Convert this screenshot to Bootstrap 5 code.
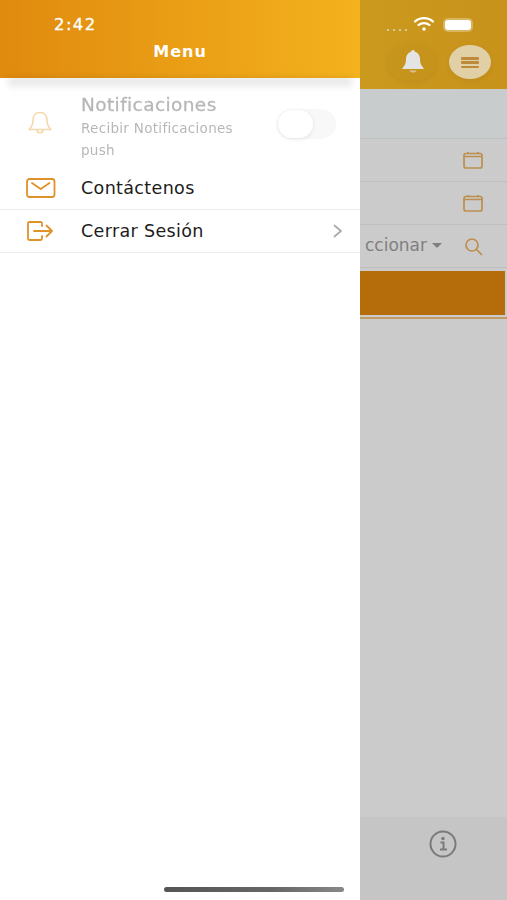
<!DOCTYPE html>
<html lang="es">
<head>
<meta charset="utf-8">
<title>Menu</title>
<link rel="stylesheet" href="https://cdn.jsdelivr.net/npm/bootstrap@5.3.0/dist/css/bootstrap.min.css">
<style>
html,body{margin:0;height:900px;overflow:hidden;background:#fff}
.shell{width:507px;height:900px;font-family:"DejaVu Sans",sans-serif;position:relative;overflow:hidden}
.drawer{width:360px;height:900px;background:#fff;flex:none}
.drawer-head{height:78px;background:linear-gradient(90deg,#e08a0e,#f4b21d);color:#fff;position:relative}
.drawer-head::after{content:"";position:absolute;left:8px;right:8px;top:100%;height:12px;background:linear-gradient(180deg,rgba(0,0,0,.14),rgba(0,0,0,0));filter:blur(3px)}
.clock{position:absolute;left:54px;top:14px;font-size:16.500px;font-weight:400;line-height:22px;letter-spacing:1.400px;-webkit-text-stroke:.3px #fff}
.menu-title{position:absolute;left:0;right:0;top:42px;text-align:center;font-size:16px;font-weight:700;line-height:20px;letter-spacing:1px}
.mi-icon{width:81px;flex:none;padding-left:26px}
.mi-notif{height:89px;background:#fff}
.mi-notif .mi-text{opacity:.33}
.notif-body{padding-top:10px}
.notif-title{font-size:18.500px;line-height:24px;color:#222;-webkit-text-stroke:.3px #222;letter-spacing:.4px;margin-top:-1px}
.notif-sub{font-size:13.500px;line-height:22px;width:180px;color:#222;letter-spacing:.3px}
.mi-row{height:43px;font-size:17.500px;color:#1c1c1c;border-bottom:1px solid #ebebeb;letter-spacing:.35px}
.toggle-off{width:59px;height:30px;border-radius:15px;background:#f8f8f8;position:absolute;left:277px;top:109px}
.toggle-off::after{content:"";position:absolute;left:1px;top:1px;width:35px;height:28px;border-radius:14px;background:#fff;box-shadow:0 1px 4px rgba(0,0,0,.09)}
.backdrop{flex:1;height:900px;background:#cbcbcb;overflow:hidden}
.bd-head{height:89px;background:linear-gradient(90deg,#cb9a1d,#c8921b);position:relative}
.bd-band{height:50px;background:#c9cccd;border-bottom:1px solid #bfbfbf}
.bd-row{height:43px;border-bottom:1px solid #bfbfbf;padding-right:24px}
.bd-sel{font-size:17px;color:#7f7f7f;white-space:nowrap;margin-right:22px}
.caret-down{display:inline-block;border:5.500px solid transparent;border-top:5.500px solid #7f7f7f;border-bottom:0;margin-left:5px;vertical-align:3px}
.bd-bar{height:44px;margin:3px 2px 0 0;background:#b56c0a}
.bd-line{height:2px;margin-top:2px;background:#c29a63}
.bd-foot{height:84px;background:#c5c5c5;margin-top:498px;padding:13px 0 0 69px}
.round-bell,.round-menu{position:absolute;border-radius:50%}
.round-bell{left:28px;top:43px;width:48px;height:38px;background:rgba(0,0,0,.015);box-shadow:0 2px 6px rgba(0,0,0,.06)}
.round-menu{left:89px;top:45px;width:42px;height:34px;background:#e1cfa6;box-shadow:0 2px 6px rgba(0,0,0,.06)}
.burger{position:absolute;left:12px;top:12px;width:18px;height:11px;display:flex;flex-direction:column;justify-content:space-between}
.burger i{display:block;height:2.500px;background:#bd8a3a;border-radius:1px}
.status{position:absolute;top:16px;left:385px;display:flex;align-items:center}
.dots{width:24px;height:2px;background-image:radial-gradient(circle,#d8c69c 1px,transparent 1.2px);background-size:6px 2px;margin-top:12px}
.batt{width:26px;height:10px;border-radius:3px;background:#fff;margin-left:10px;box-shadow:0 0 0 2px rgba(255,255,255,.3);margin-top:1px}
.homebar{position:absolute;left:164px;top:887px;width:180px;height:5px;border-radius:3px;background:linear-gradient(90deg,#555,#666 60%,#888)}
</style>
</head>
<body>
<div class="shell d-flex">
  <aside class="drawer">
    <div class="drawer-head">
      <div class="clock">2:42</div>
      <div class="menu-title">Menu</div>
    </div>
    <div class="mi-notif d-flex align-items-center">
      <div class="mi-icon mi-text">
        <svg width="28" height="28" viewBox="0 0 28 28" fill="none" stroke="#e08a0e" stroke-width="1.600" stroke-linejoin="round"><path d="M14 3.500c-4.600 0-7 3.400-7 7.500 0 4.600-1.500 7.300-4 9.500h22c-2.500-2.200-4-4.900-4-9.500 0-4.100-2.400-7.500-7-7.500z"/><path d="M11 21c0 3.600 6 3.600 6 0"/></svg>
      </div>
      <div class="mi-text notif-body">
        <div class="notif-title">Notificaciones</div>
        <div class="notif-sub">Recibir Notificaciones push</div>
      </div>
    </div>
    <div class="mi-row d-flex align-items-center">
      <div class="mi-icon">
        <svg width="30" height="20" viewBox="0 0 30 20" fill="none" stroke="#e0922a" stroke-width="1.800" stroke-linejoin="round" class="d-block"><rect x="1" y="1" width="27.500" height="18" rx="2.500"/><path d="M6 5l8.700 6L23.500 5" stroke-linecap="round"/></svg>
      </div>
      <span>Contáctenos</span>
    </div>
    <div class="mi-row d-flex align-items-center">
      <div class="mi-icon">
        <svg width="28" height="20" viewBox="0 0 28 20" fill="none" stroke="#e0922a" stroke-width="1.800" stroke-linecap="round" stroke-linejoin="round" class="d-block"><path d="M16 5V2.500C16 1.600 15.400 1 14.500 1H3.500C2.600 1 2 1.600 2 2.500v15c0 .9.600 1.500 1.500 1.500h11c.9 0 1.500-.6 1.500-1.500V15"/><path d="M8 10h18M20.500 4.500L26 10l-5.500 5.500"/></svg>
      </div>
      <span class="flex-grow-1">Cerrar Sesión</span>
      <svg width="12" height="16" viewBox="0 0 12 16" fill="none" stroke="#a9a9a9" stroke-width="1.700" stroke-linecap="round" stroke-linejoin="round" class="me-3"><path d="M2.500 2.500L9 8l-6.500 5.500"/></svg>
    </div>
  </aside>
  <div class="backdrop">
    <div class="bd-head">
      <div class="round-bell"></div>
      <div class="round-menu"><span class="burger"><i></i><i></i><i></i></span></div>
    </div>
    <div class="bd-band"></div>
    <div class="bd-row d-flex align-items-center justify-content-end">
      <svg width="20" height="18" viewBox="0 0 20 18" fill="none" stroke="#bd8f4e" stroke-width="1.700"><rect x="1" y="2.500" width="18" height="14.500" rx="2"/><path d="M1 5.500h18M5 1v1.500M15 1v1.500"/></svg>
    </div>
    <div class="bd-row d-flex align-items-center justify-content-end">
      <svg width="20" height="18" viewBox="0 0 20 18" fill="none" stroke="#bd8f4e" stroke-width="1.700"><rect x="1" y="2.500" width="18" height="14.500" rx="2"/><path d="M1 5.500h18M5 1v1.500M15 1v1.500"/></svg>
    </div>
    <div class="bd-row d-flex align-items-center justify-content-end overflow-hidden">
      <span class="bd-sel">ccionar<i class="caret-down"></i></span>
      <svg width="19" height="19" viewBox="0 0 19 19" fill="none" stroke="#bd8f4e" stroke-width="1.700" stroke-linecap="round"><circle cx="8" cy="8" r="6"/><path d="M12.500 12.500L17.500 17.500"/></svg>
    </div>
    <div class="bd-bar"></div>
    <div class="bd-line"></div>
    <div class="bd-foot">
      <svg width="28" height="28" viewBox="0 0 28 28" fill="none" stroke="#7a7a7a" stroke-width="2"><circle cx="14" cy="14" r="12.500"/><circle cx="14" cy="8.500" r="1.700" fill="#7a7a7a" stroke="none"/><path d="M11.500 12.500H14.500V19M11 19.500h7"/></svg>
    </div>
  </div>
  <div class="toggle-off" aria-hidden="true"></div>
  <div class="status">
    <span class="dots"></span>
    <svg width="22" height="16" viewBox="0 0 22 16" fill="none" stroke="#fff" stroke-width="2.200" stroke-linecap="round" class="ms-1"><path d="M2 5.500c5-4.600 13-4.600 18 0M5.500 9c3-2.600 8-2.600 11 0"/><circle cx="11" cy="13" r="1.800" fill="#fff" stroke="none"/></svg>
    <span class="batt"></span>
  </div>
  <svg class="position-absolute top-0 start-0" width="507" height="90" viewBox="0 0 507 90" fill="#e4e4e4" aria-hidden="true"><path d="M413 50c-1.100 0-1.800.8-1.900 1.800-3.300.9-5.100 3.700-5.100 7.200 0 4-1 6.500-3.500 9v1h21v-1c-2.500-2.500-3.500-5-3.500-9 0-3.500-1.800-6.300-5.100-7.200-.1-1-.8-1.800-1.900-1.800z"/><path d="M409.500 70.500c.8 2.800 6.200 2.800 7 0z" fill="#d9c293"/></svg>
  <div class="homebar"></div>
</div>
<script src="https://cdn.jsdelivr.net/npm/bootstrap@5.3.0/dist/js/bootstrap.bundle.min.js"></script>
</body>
</html>
